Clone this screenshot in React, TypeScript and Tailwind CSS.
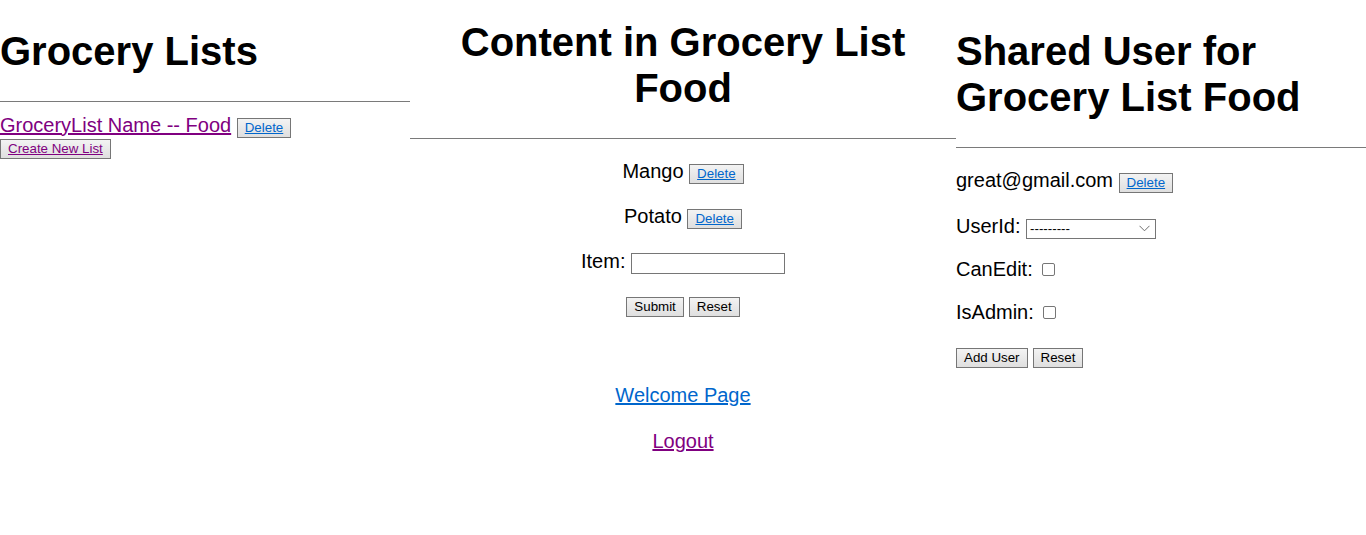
import React from "react";

const btn =
  "inline-block align-baseline border border-[#767676] bg-gradient-to-b from-[#f3f3f3] to-[#dfdfdf] px-[7px] py-[1px] text-[13.33px] leading-[16px] text-black rounded-none";

function Btn({ children, color }: { children: React.ReactNode; color?: "blue" | "purple" }) {
  const inner =
    color === "blue" ? (
      <span className="underline text-[#0066cc]">{children}</span>
    ) : color === "purple" ? (
      <span className="underline text-[#800080]">{children}</span>
    ) : (
      children
    );
  return (
    <button type="button" className={btn}>
      {inner}
    </button>
  );
}

function Check() {
  return (
    <span className="inline-block align-baseline w-[13px] h-[13px] ml-[4px] mr-[3px] border border-[#767676] bg-white rounded-[2px]"></span>
  );
}

export default function App() {
  return (
    <div
      className="flex w-[1366px] h-[535px] bg-white text-black text-[20px] leading-[23px]"
      style={{ fontFamily: '"Liberation Sans", Arial, sans-serif' }}
    >
      {/* Left column */}
      <div className="w-[410px] flex flex-col">
        <h1 className="mt-[28px] mb-[27px] text-[40px] leading-[46px] font-bold">Grocery Lists</h1>
        <hr className="h-0 border-0 border-t border-[#7a7a7a]" />
        <div className="mt-[12px] h-[25px] whitespace-nowrap">
          <a href="#" className="underline text-[#800080]">
            GroceryList Name -- Food
          </a>{" "}
          <Btn color="blue">Delete</Btn>
        </div>
        <div className="flex">
          <Btn color="purple">Create New List</Btn>
        </div>
      </div>

      {/* Middle column */}
      <div className="w-[546px] flex flex-col text-center">
        <h1 className="mt-[19px] mb-[27px] text-[40px] leading-[46px] font-bold">
          Content in Grocery List Food
        </h1>
        <hr className="h-0 border-0 border-t border-[#7a7a7a]" />
        <div className="mt-[21px] h-[23px] whitespace-nowrap">
          Mango <Btn color="blue">Delete</Btn>
        </div>
        <div className="mt-[22px] h-[23px] whitespace-nowrap">
          Potato <Btn color="blue">Delete</Btn>
        </div>
        <div className="mt-[22px] h-[23px] whitespace-nowrap">
          Item:{" "}
          <input
            type="text"
            className="inline-block align-baseline w-[154px] h-[21px] border border-[#767676] bg-white px-[3px] py-[2px] text-[13.33px] leading-[15px] outline-none"
          />
        </div>
        <div className="mt-[24px] flex justify-center gap-[5px]">
          <Btn>Submit</Btn>
          <Btn>Reset</Btn>
        </div>
        <div className="mt-[67px] h-[23px]">
          <a href="#" className="underline text-[#0066cc]">
            Welcome Page
          </a>
        </div>
        <div className="mt-[23px] h-[23px]">
          <a href="#" className="underline text-[#800080]">
            Logout
          </a>
        </div>
      </div>

      {/* Right column */}
      <div className="w-[410px] flex flex-col">
        <h1 className="mt-[28px] mb-[27px] text-[40px] leading-[46px] font-bold">
          Shared User for Grocery List Food
        </h1>
        <hr className="h-0 border-0 border-t border-[#7a7a7a]" />
        <div className="mt-[21px] h-[23px] whitespace-nowrap">
          great@gmail.com <Btn color="blue">Delete</Btn>
        </div>
        <div className="mt-[23px] h-[23px] whitespace-nowrap">
          UserId:{" "}
          <span className="relative inline-block align-baseline w-[130px] h-[20px] border border-[#767676] bg-white pl-[3px] text-left text-[13.33px] leading-[18px]">
            ---------
            <svg
              className="absolute right-[5px] top-[5px]"
              width="11"
              height="7"
              viewBox="0 0 11 7"
              fill="none"
            >
              <path d="M0.5 0.8 L5.5 5.8 L10.5 0.8" stroke="#6d6d6d" strokeWidth="1" />
            </svg>
          </span>
        </div>
        <div className="mt-[20px] h-[23px] whitespace-nowrap">
          CanEdit: <Check />
        </div>
        <div className="mt-[20px] h-[23px] whitespace-nowrap">
          IsAdmin: <Check />
        </div>
        <div className="mt-[24px] flex gap-[5px]">
          <Btn>Add User</Btn>
          <Btn>Reset</Btn>
        </div>
      </div>
    </div>
  );
}
